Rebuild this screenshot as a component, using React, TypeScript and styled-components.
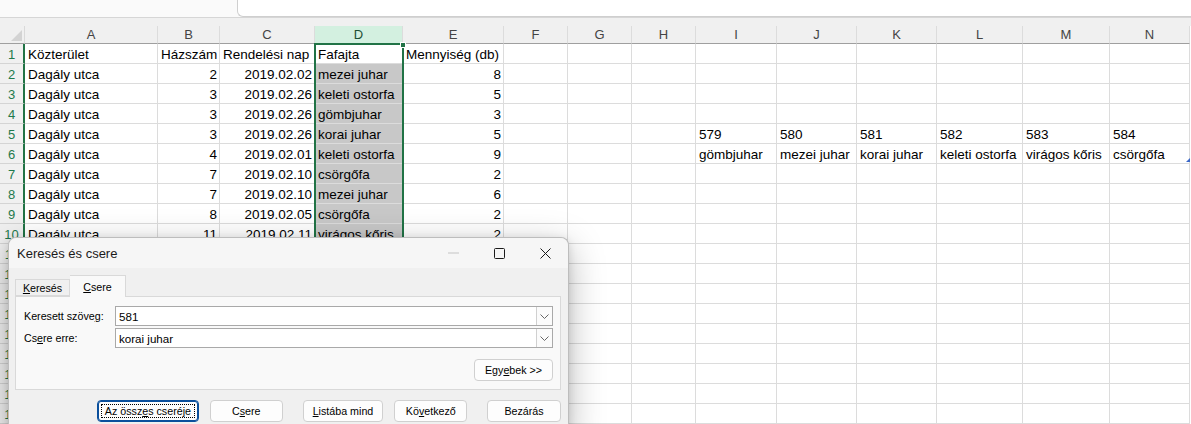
import React from "react";
import styled, { createGlobalStyle } from "styled-components";

const GlobalStyle = createGlobalStyle`
  html, body {
    margin: 0;
    padding: 0;
    background: #ffffff;
    overflow: hidden;
  }
  * {
    box-sizing: border-box;
  }
`;

const COLS = [133, 62, 95, 88, 101, 64, 64, 64, 81, 80, 80, 86, 87, 80];
const LETTERS = "ABCDEFGHIJKLMN".split("");
const ROW_COUNT = 19;

const GREEN = "#217346";

const Page = styled.div`
  position: relative;
  width: 1191px;
  height: 424px;
  overflow: hidden;
  font-family: "Liberation Sans", Arial, sans-serif;
  background: #ffffff;
`;

const TopBar = styled.div`
  height: 18px;
  background: #fafafa;
  border-bottom: 1px solid #d6d6d6;
  display: flex;
`;

const FormulaBox = styled.div`
  margin-left: 237px;
  flex: 1;
  height: 17px;
  background: #ffffff;
  border: 1px solid #cfcfcf;
  border-top: none;
  border-right: none;
  border-bottom-left-radius: 6px;
`;

const GapStrip = styled.div`
  height: 8px;
  background: #f0f0f0;
`;

const Sheet = styled.div`
  position: relative;
  display: grid;
  grid-template-columns: 25px ${COLS.map((c) => `${c}px`).join(" ")};
  grid-template-rows: 18px;
  grid-auto-rows: 20px;
`;

const Corner = styled.div`
  position: relative;
  background: #f0f0f0;
  border-bottom: 1px solid #9f9f9f;
  border-right: 1px solid #d9d9d9;

  &::after {
    content: "";
    position: absolute;
    right: 2px;
    bottom: 2px;
    width: 0;
    height: 0;
    border-left: 11px solid transparent;
    border-bottom: 11px solid #d3d3d3;
  }
`;

const ColHeader = styled.div<{ $active?: boolean }>`
  background: ${({ $active }) => ($active ? "#d3f0e0" : "#f0f0f0")};
  border-bottom: 1px solid ${({ $active }) => ($active ? GREEN : "#9f9f9f")};
  border-right: 1px solid #dcdcdc;
  color: ${({ $active }) => ($active ? "#1d4f33" : "#444444")};
  font-size: 13px;
  display: flex;
  align-items: center;
  justify-content: center;
`;

const RowHeader = styled.div<{ $sel?: boolean }>`
  background: #f0f0f0;
  border-bottom: 1px solid #d4d4d4;
  border-right: 2px solid ${({ $sel }) => ($sel ? GREEN : "#d4d4d4")};
  color: ${({ $sel }) => ($sel ? "#1e7a4c" : "#444444")};
  font-size: 13px;
  display: flex;
  align-items: center;
  justify-content: center;
  padding-top: 1px;
`;

const Cell = styled.div<{ $num?: boolean; $fill?: boolean }>`
  position: relative;
  background: ${({ $fill }) => ($fill ? "#c8c8c8" : "#ffffff")};
  border-right: 1px solid #dcdcdc;
  border-bottom: 1px solid #dcdcdc;
  font-size: 13.5px;
  color: #000000;
  white-space: nowrap;
  overflow: visible;
  display: flex;
  align-items: center;
  justify-content: ${({ $num }) => ($num ? "flex-end" : "flex-start")};
  padding: 1px ${({ $num }) => ($num ? "2px" : "0")} 0 ${({ $num }) => ($num ? "0" : "3px")};
  z-index: 0;
`;

const CornerMark = styled.span`
  position: absolute;
  right: -1px;
  bottom: 1px;
  width: 0;
  height: 0;
  border-left: 4px solid transparent;
  border-bottom: 4px solid #3a67c8;
`;

const SelectionBox = styled.div`
  position: absolute;
  left: 314px;
  top: 17px;
  width: 90px;
  bottom: -4px;
  border: 2px solid ${GREEN};
  pointer-events: none;
  z-index: 2;
`;

const FillHandle = styled.div`
  position: absolute;
  right: -4px;
  top: -3px;
  width: 6px;
  height: 6px;
  background: ${GREEN};
  border: 1px solid #ffffff;
`;

/* dialog */

const Dialog = styled.div`
  position: absolute;
  left: 8px;
  top: 237px;
  width: 561px;
  height: 200px;
  background: #f0f0f0;
  border: 1px solid #bdbdbd;
  border-bottom: none;
  border-radius: 8px 8px 0 0;
  box-shadow: 0 10px 36px rgba(0, 0, 0, 0.28), 0 2px 8px rgba(0, 0, 0, 0.12);
  z-index: 10;
  font-family: "Liberation Sans", Arial, sans-serif;
  color: #000000;
`;

const TitleBar = styled.div`
  height: 30px;
  background: #f6f6f6;
  border-radius: 8px 8px 0 0;
  display: flex;
  align-items: center;
  padding-left: 8px;
`;

const Title = styled.div`
  flex: 1;
  font-size: 13px;
  color: #1a1a1a;
  padding-top: 1px;
`;

const WinButton = styled.div`
  width: 46px;
  height: 30px;
  display: flex;
  align-items: center;
  justify-content: center;
`;

const Body = styled.div`
  padding: 6px 7px 0 6px;
`;

const TabRow = styled.div`
  display: flex;
  align-items: flex-end;
  height: 22px;
  position: relative;
  z-index: 1;
`;

const Tab = styled.div<{ $active?: boolean }>`
  height: ${({ $active }) => ($active ? "22px" : "17px")};
  width: ${({ $active }) => ($active ? "56px" : "55px")};
  margin-bottom: ${({ $active }) => ($active ? "-1px" : "0")};
  background: ${({ $active }) => ($active ? "#f9f9f9" : "#f0f0f0")};
  border: 1px solid #d9d9d9;
  border-bottom: ${({ $active }) => ($active ? "none" : "1px solid #d9d9d9")};
  border-left: ${({ $active }) => ($active ? "none" : "1px solid #d9d9d9")};
  font-size: 10.7px;
  display: flex;
  align-items: center;
  justify-content: center;
  padding-top: ${({ $active }) => ($active ? "1px" : "0")};
`;

const Panel = styled.div`
  height: 94px;
  background: #f9f9f9;
  border: 1px solid #d9d9d9;
  padding: 9px 7px 0 8px;
  display: flex;
  flex-direction: column;
  gap: 2px;
`;

const FieldRow = styled.div`
  display: flex;
  align-items: center;
  height: 20px;
`;

const Label = styled.div`
  width: 91px;
  font-size: 10.7px;
`;

const Combo = styled.div`
  flex: 1;
  height: 20px;
  background: #ffffff;
  border: 1px solid #a9a9a9;
  display: flex;
  align-items: center;
`;

const ComboText = styled.div`
  flex: 1;
  font-size: 11.6px;
  padding-left: 3px;
`;

const ComboArrow = styled.div`
  width: 16px;
  height: 18px;
  border-left: 1px solid #d0d0d0;
  background: #fbfbfb;
  display: flex;
  align-items: center;
  justify-content: center;
`;

const PanelActions = styled.div`
  display: flex;
  justify-content: flex-end;
  margin-top: 9px;
`;

const Button = styled.div<{ $w: number; $focus?: boolean }>`
  position: relative;
  width: ${({ $w }) => $w}px;
  height: 22px;
  background: #fdfdfd;
  border: 1px solid ${({ $focus }) => ($focus ? "#0a4f9c" : "#d0d0d0")};
  box-shadow: ${({ $focus }) => ($focus ? "inset 0 0 0 1px #0a4f9c" : "none")};
  border-radius: 4px;
  font-size: 10.7px;
  display: flex;
  align-items: center;
  justify-content: center;
  white-space: nowrap;

  &::after {
    content: "";
    display: ${({ $focus }) => ($focus ? "block" : "none")};
    position: absolute;
    inset: 3px;
    border: 1px dotted #000000;
  }
`;

const ButtonRow = styled.div`
  display: flex;
  padding-left: 82px;
  margin-top: 10px;
`;

const Gap = styled.div<{ $w: number }>`
  width: ${({ $w }) => $w}px;
`;

type CellData = { t: string; n?: boolean };

const base: [string, string, string, string, string][] = [
  ["Dagály utca", "2", "2019.02.02", "mezei juhar", "8"],
  ["Dagály utca", "3", "2019.02.26", "keleti ostorfa", "5"],
  ["Dagály utca", "3", "2019.02.26", "gömbjuhar", "3"],
  ["Dagály utca", "3", "2019.02.26", "korai juhar", "5"],
  ["Dagály utca", "4", "2019.02.01", "keleti ostorfa", "9"],
  ["Dagály utca", "7", "2019.02.10", "csörgőfa", "2"],
  ["Dagály utca", "7", "2019.02.10", "mezei juhar", "6"],
  ["Dagály utca", "8", "2019.02.05", "csörgőfa", "2"],
  ["Dagály utca", "11", "2019.02.11", "virágos kőris", "2"],
];

function buildRows(): CellData[][] {
  const rows: CellData[][] = [];
  const header = ["Közterület", "Házszám", "Rendelési nap", "Fafajta", "Mennyiség (db)"];
  const first: CellData[] = COLS.map(() => ({ t: "" }));
  header.forEach((h, i) => (first[i] = { t: h }));
  rows.push(first);
  base.forEach((r) => {
    const row: CellData[] = COLS.map(() => ({ t: "" }));
    row[0] = { t: r[0] };
    row[1] = { t: r[1], n: true };
    row[2] = { t: r[2], n: true };
    row[3] = { t: r[3] };
    row[4] = { t: r[4], n: true };
    rows.push(row);
  });
  // rows hidden behind the dialog
  while (rows.length < ROW_COUNT) {
    rows.push(COLS.map(() => ({ t: "" })));
  }
  const ids = ["579", "580", "581", "582", "583", "584"];
  const names = ["gömbjuhar", "mezei juhar", "korai juhar", "keleti ostorfa", "virágos kőris", "csörgőfa"];
  ids.forEach((id, i) => (rows[4][8 + i] = { t: id }));
  names.forEach((nm, i) => (rows[5][8 + i] = { t: nm }));
  return rows;
}

const Chevron = () => (
  <svg width="9" height="5" viewBox="0 0 9 5">
    <path d="M0.5 0.5 L4.5 4.5 L8.5 0.5" fill="none" stroke="#666" strokeWidth="1" />
  </svg>
);

const App: React.FC = () => {
  const rows = buildRows();

  return (
    <>
      <GlobalStyle />
      <Page>
        <TopBar>
          <FormulaBox />
        </TopBar>
        <GapStrip />
        <Sheet>
          <Corner />
          {LETTERS.map((l) => (
            <ColHeader key={l} $active={l === "D"}>
              {l}
            </ColHeader>
          ))}
          {rows.map((row, ri) => (
            <React.Fragment key={ri}>
              <RowHeader $sel>{ri + 1}</RowHeader>
              {row.map((c, ci) => (
                <Cell key={ci} $num={c.n} $fill={ci === 3 && ri > 0}>
                  {c.t}
                  {ri === 5 && ci === 13 && <CornerMark />}
                </Cell>
              ))}
            </React.Fragment>
          ))}
          <SelectionBox>
            <FillHandle />
          </SelectionBox>
        </Sheet>

        <Dialog>
          <TitleBar>
            <Title>Keresés és csere</Title>
            <WinButton>
              <svg width="11" height="2" viewBox="0 0 11 2">
                <path d="M0 1 H11" stroke="#c4c4c4" strokeWidth="1" />
              </svg>
            </WinButton>
            <WinButton>
              <svg width="11" height="11" viewBox="0 0 11 11">
                <rect x="0.5" y="0.5" width="10" height="10" rx="1" fill="none" stroke="#1a1a1a" strokeWidth="1" />
              </svg>
            </WinButton>
            <WinButton>
              <svg width="11" height="11" viewBox="0 0 11 11">
                <path d="M0.5 0.5 L10.5 10.5 M10.5 0.5 L0.5 10.5" stroke="#1a1a1a" strokeWidth="1" />
              </svg>
            </WinButton>
          </TitleBar>
          <Body>
            <TabRow>
              <Tab>
                <span>
                  <u>K</u>eresés
                </span>
              </Tab>
              <Tab $active>
                <span>
                  <u>C</u>sere
                </span>
              </Tab>
            </TabRow>
            <Panel>
              <FieldRow>
                <Label>
                  Keresett szöve<u>g</u>:
                </Label>
                <Combo>
                  <ComboText>581</ComboText>
                  <ComboArrow>
                    <Chevron />
                  </ComboArrow>
                </Combo>
              </FieldRow>
              <FieldRow>
                <Label>
                  Cs<u>e</u>re erre:
                </Label>
                <Combo>
                  <ComboText>korai juhar</ComboText>
                  <ComboArrow>
                    <Chevron />
                  </ComboArrow>
                </Combo>
              </FieldRow>
              <PanelActions>
                <Button $w={79}>
                  <span>
                    Egy<u>e</u>bek &gt;&gt;
                  </span>
                </Button>
              </PanelActions>
            </Panel>
            <ButtonRow>
              <Button $w={102} $focus>
                <span>
                  Az össz<u>e</u>s cseréje
                </span>
              </Button>
              <Gap $w={11} />
              <Button $w={73}>
                <span>
                  C<u>s</u>ere
                </span>
              </Button>
              <Gap $w={20} />
              <Button $w={81}>
                <span>
                  <u>L</u>istába mind
                </span>
              </Button>
              <Gap $w={11} />
              <Button $w={73}>
                <span>
                  Kö<u>v</u>etkező
                </span>
              </Button>
              <Gap $w={20} />
              <Button $w={74}>
                <span>Bezárás</span>
              </Button>
            </ButtonRow>
          </Body>
        </Dialog>
      </Page>
    </>
  );
};

export default App;
